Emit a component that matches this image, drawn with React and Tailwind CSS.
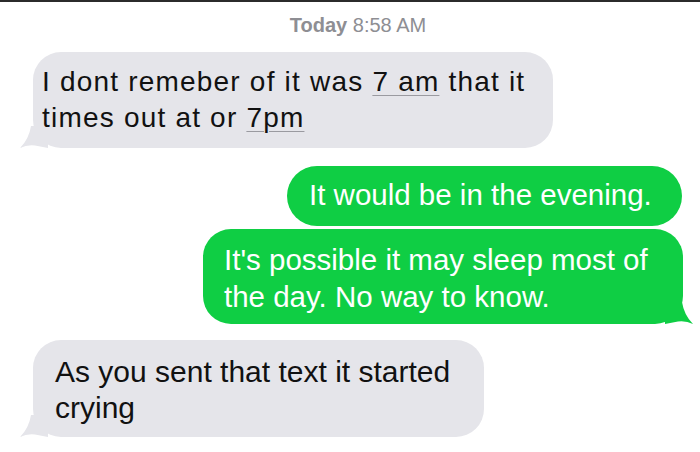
import React from 'react'

const font = { fontFamily: '"Liberation Sans", Arial, sans-serif' }

function TailLeft({ color }) {
  return (
    <svg className="absolute -left-[13px] bottom-0" width="28" height="22" viewBox="0 0 28 22">
      <path d="M28 0 L28 22 L15 19.5 Q7 18.5 0 22 Q9 13 11 0 Z" fill={color} />
    </svg>
  )
}

function TailRight({ color }) {
  return (
    <svg className="absolute -right-[10px] bottom-0" width="28" height="22" viewBox="0 0 28 22">
      <path d="M0 0 L0 22 L13 19.5 Q21 18.5 28 22 Q19 13 17 0 Z" fill={color} />
    </svg>
  )
}

export default function App() {
  return (
    <div className="w-[700px] h-[452px] bg-white border-t-2 border-[#2b2b2b] overflow-hidden" style={font}>
      {/* Timestamp */}
      <div className="pt-[10px] pl-[16px] text-center text-[20px] leading-[26px] text-[#8e8e93]">
        <span className="font-semibold">Today</span> 8:58 AM
      </div>

      {/* Incoming */}
      <div className="mt-[14px] ml-[33px] relative w-[520px] h-[96px] rounded-[28px] bg-[#e5e5ea] pl-[9px] pt-[12px] text-[28px] leading-[36px] text-[#111] tracking-[1.2px]">
        <TailLeft color="#e5e5ea" />
        <p className="relative">
          I dont remeber of it was{' '}
          <span className="underline decoration-[#9a9aa0] decoration-1 underline-offset-[4px]">7 am</span> that it
          <br />
          times out at or{' '}
          <span className="underline decoration-[#9a9aa0] decoration-1 underline-offset-[4px]">7pm</span>
        </p>
      </div>

      {/* Outgoing */}
      <div className="mt-[18px] flex flex-col items-end gap-[3px] pr-[17px]">
        <div className="w-[395px] h-[60px] rounded-[30px] bg-[#0fce44] pl-[22px] pt-[10px] text-[29.5px] leading-[37px] text-white mr-px">
          It would be in the evening.
        </div>
        <div className="relative w-[480px] h-[95px] rounded-[28px] bg-[#0fce44] pl-[21px] pt-[12px] text-[29.5px] leading-[37px] text-white">
          <TailRight color="#0fce44" />
          <p className="relative">
            It's possible it may sleep most of
            <br />
            the day. No way to know.
          </p>
        </div>
      </div>

      {/* Incoming */}
      <div className="mt-[16px] ml-[33px] relative w-[451px] h-[97px] rounded-[28px] bg-[#e5e5ea] pl-[22px] pt-[14px] text-[30px] leading-[36px] text-[#111]">
        <TailLeft color="#e5e5ea" />
        <p className="relative">
          As you sent that text it started
          <br />
          crying
        </p>
      </div>
    </div>
  )
}
